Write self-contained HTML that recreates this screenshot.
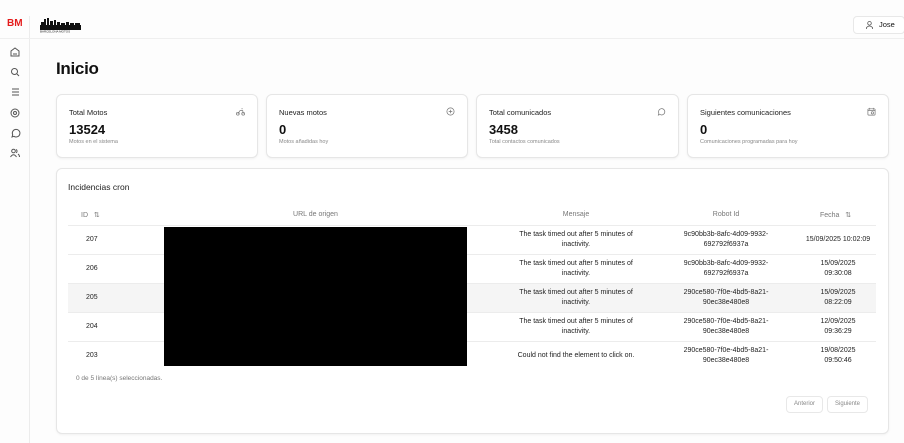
<!DOCTYPE html>
<html><head><meta charset="utf-8"><style>
*{box-sizing:border-box;margin:0;padding:0}
body{width:904px;height:443px;overflow:hidden;background:#fdfdfd;font-family:"Liberation Sans",sans-serif;color:#111;position:relative}
.abs{position:absolute}
.side{left:29px;top:16px;width:1px;height:427px;background:#ececec}
.hline{left:0;top:38px;width:904px;height:1px;background:#efefef}
.bm{left:7px;top:18px;font-weight:bold;font-size:10px;color:#e41b1b}
.ico{left:9px;width:12px;height:12px}
.card{background:#fff;border:1px solid #e6e6e6;border-radius:6px;box-shadow:0 1px 2px rgba(0,0,0,.05)}
.ct{font-size:7.5px;color:#222;position:absolute;left:12px;top:13px}
.cv{font-size:13px;font-weight:bold;position:absolute;left:12px;top:27px}
.cs{font-size:5.5px;color:#888;position:absolute;left:12px;top:44px}
.ci{position:absolute;right:12px;top:12px;width:9px;height:9px}
.th{font-size:7px;color:#777;top:211px}
.row{left:68px;width:808px;height:29px;border-top:1px solid #ececec}
.c{font-size:7px;color:#222;text-align:center;line-height:10px}
.btn{border:1px solid #e8e8e8;border-radius:4px;font-size:6px;color:#888;text-align:center;line-height:15px;height:17px;background:#fff}
</style></head><body>
<div class="abs side"></div>
<div class="abs hline"></div>
<div class="abs bm">BM</div>
<svg class="abs" style="left:40px;top:17px" width="42" height="16" viewBox="0 0 42 16" shape-rendering="crispEdges"><g fill="#111"><rect x="0" y="8" width="41" height="5"/><rect x="1" y="5" width="3" height="4"/><rect x="4" y="2" width="2" height="7"/><rect x="7" y="1" width="2" height="8"/><rect x="10" y="4" width="3" height="5"/><rect x="14" y="3" width="2" height="6"/><rect x="17" y="5" width="3" height="4"/><rect x="21" y="6" width="4" height="3"/><rect x="26" y="5" width="3" height="4"/><rect x="30" y="6" width="4" height="3"/><rect x="35" y="6" width="5" height="3"/></g><text x="0" y="15.7" font-size="3" font-family="Liberation Sans" fill="#222">BARCELONA MOTOS</text></svg>
<div class="abs" style="left:853px;top:16px;width:52px;height:18px;border:1px solid #e8e8e8;border-radius:4px;background:#fff;font-size:7.5px;line-height:16px;padding-left:25px">Jose</div>
<svg class="abs" style="left:866px;top:21px" width="7" height="8" viewBox="0 0 7 8" fill="none" stroke="#555" stroke-width=".8"><circle cx="3.5" cy="2.3" r="1.8"/><path d="M.5 8V6.5Q3.5 3.5 6.5 6.5V8"/></svg>
<svg class="abs ico" style="top:46px" viewBox="0 0 12 12" fill="none" stroke="#555" stroke-width="1"><path d="M2 10V5L6 2l4 3v5z M4 8h4"/></svg>
<svg class="abs ico" style="top:66px" viewBox="0 0 12 12" fill="none" stroke="#555" stroke-width="1"><circle cx="5.5" cy="5.5" r="3"/><path d="M8 8l2 2"/></svg>
<svg class="abs ico" style="top:86px" viewBox="0 0 12 12" fill="none" stroke="#555" stroke-width="1"><path d="M3 3h7M3 6h7M3 9h7"/></svg>
<svg class="abs ico" style="top:107px" viewBox="0 0 12 12" fill="none" stroke="#555" stroke-width="1"><circle cx="6" cy="6" r="4"/><circle cx="6" cy="6" r="1.5"/></svg>
<svg class="abs ico" style="top:127px" viewBox="0 0 12 12" fill="none" stroke="#555" stroke-width="1"><path d="M3 10l.7-2.2A3.8 3.8 0 1 1 5 9.3z"/></svg>
<svg class="abs ico" style="top:147px" viewBox="0 0 12 12" fill="none" stroke="#555" stroke-width="1"><circle cx="4.5" cy="4" r="1.8"/><path d="M1.5 10Q4.5 5.5 7.5 10M7 2.5a1.8 1.8 0 0 1 0 3.3M9 7q1.5 1 1.5 3"/></svg>
<div class="abs" style="left:56px;top:59px;font-size:17px;font-weight:bold;letter-spacing:-.3px">Inicio</div>

<div class="abs card" style="left:56px;top:94px;width:202px;height:64px"><div class="ct">Total Motos</div><div class="cv">13524</div><div class="cs">Motos en el sistema</div><svg class="ci" viewBox="0 0 10 10" fill="none" stroke="#777" stroke-width=".8"><circle cx="2" cy="7.5" r="1.6"/><circle cx="8" cy="7.5" r="1.6"/><path d="M2 7.5L4.5 4h3L8 7.5M6 2h1.5"/></svg></div>
<div class="abs card" style="left:266px;top:94px;width:202px;height:64px"><div class="ct">Nuevas motos</div><div class="cv">0</div><div class="cs">Motos añadidas hoy</div><svg class="ci" viewBox="0 0 10 10" fill="none" stroke="#777" stroke-width=".8"><circle cx="5" cy="5" r="4"/><path d="M5 3v4M3 5h4"/></svg></div>
<div class="abs card" style="left:476px;top:94px;width:203px;height:64px"><div class="ct">Total comunicados</div><div class="cv">3458</div><div class="cs">Total contactos comunicados</div><svg class="ci" viewBox="0 0 10 10" fill="none" stroke="#777" stroke-width=".8"><path d="M1.5 9l.6-2A3.5 3.5 0 1 1 3.3 8.3z"/></svg></div>
<div class="abs card" style="left:687px;top:94px;width:202px;height:64px"><div class="ct">Siguientes comunicaciones</div><div class="cv">0</div><div class="cs">Comunicaciones programadas para hoy</div><svg class="ci" viewBox="0 0 10 10" fill="none" stroke="#777" stroke-width=".8"><rect x="1" y="2" width="8" height="7" rx="1"/><path d="M3 1v2M7 1v2M1 4h8"/><circle cx="6" cy="6.5" r="1.3"/></svg></div>

<div class="abs card" style="left:56px;top:168px;width:833px;height:266px"></div>
<div class="abs" style="left:68px;top:182px;font-size:8.5px;color:#222">Incidencias cron</div>
<div class="abs th" style="left:81px">ID &nbsp;&nbsp;⇅</div>
<div class="abs th" style="left:164px;width:303px;text-align:center">URL de origen</div>
<div class="abs th" style="left:500px;width:152px;text-align:center">Mensaje</div>
<div class="abs th" style="left:650px;width:152px;text-align:center">Robot Id</div>
<div class="abs th" style="left:820px">Fecha &nbsp;&nbsp;⇅</div>

<div class="abs row" style="top:225px"></div>
<div class="abs row" style="top:254px"></div>
<div class="abs row" style="top:283px;background:#f5f5f5"></div>
<div class="abs row" style="top:312px"></div>
<div class="abs row" style="top:341px"></div>

<div class="abs c" style="left:86px;top:235px">207</div>
<div class="abs c" style="left:86px;top:264px">206</div>
<div class="abs c" style="left:86px;top:293px">205</div>
<div class="abs c" style="left:86px;top:322px">204</div>
<div class="abs c" style="left:86px;top:351px">203</div>

<div class="abs c" style="left:496px;top:230px;width:160px">The task timed out after 5 minutes of<br>inactivity.</div>
<div class="abs c" style="left:496px;top:259px;width:160px">The task timed out after 5 minutes of<br>inactivity.</div>
<div class="abs c" style="left:496px;top:288px;width:160px">The task timed out after 5 minutes of<br>inactivity.</div>
<div class="abs c" style="left:496px;top:317px;width:160px">The task timed out after 5 minutes of<br>inactivity.</div>
<div class="abs c" style="left:486px;top:351px;width:180px">Could not find the element to click on.</div>

<div class="abs c" style="left:646px;top:230px;width:160px">9c90bb3b-8afc-4d09-9932-<br>692792f6937a</div>
<div class="abs c" style="left:646px;top:259px;width:160px">9c90bb3b-8afc-4d09-9932-<br>692792f6937a</div>
<div class="abs c" style="left:646px;top:288px;width:160px">290ce580-7f0e-4bd5-8a21-<br>90ec38e480e8</div>
<div class="abs c" style="left:646px;top:317px;width:160px">290ce580-7f0e-4bd5-8a21-<br>90ec38e480e8</div>
<div class="abs c" style="left:646px;top:346px;width:160px">290ce580-7f0e-4bd5-8a21-<br>90ec38e480e8</div>

<div class="abs c" style="left:796px;top:235px;width:84px">15/09/2025 10:02:09</div>
<div class="abs c" style="left:796px;top:259px;width:84px">15/09/2025<br>09:30:08</div>
<div class="abs c" style="left:796px;top:288px;width:84px">15/09/2025<br>08:22:09</div>
<div class="abs c" style="left:796px;top:317px;width:84px">12/09/2025<br>09:36:29</div>
<div class="abs c" style="left:796px;top:346px;width:84px">19/08/2025<br>09:50:46</div>

<div class="abs" style="left:164px;top:227px;width:303px;height:139px;background:#000"></div>
<div class="abs" style="left:76px;top:375px;font-size:6.5px;color:#777">0 de 5 línea(s) seleccionadas.</div>
<div class="abs btn" style="left:786px;top:396px;width:37px">Anterior</div>
<div class="abs btn" style="left:827px;top:396px;width:41px">Siguiente</div>
</body></html>
